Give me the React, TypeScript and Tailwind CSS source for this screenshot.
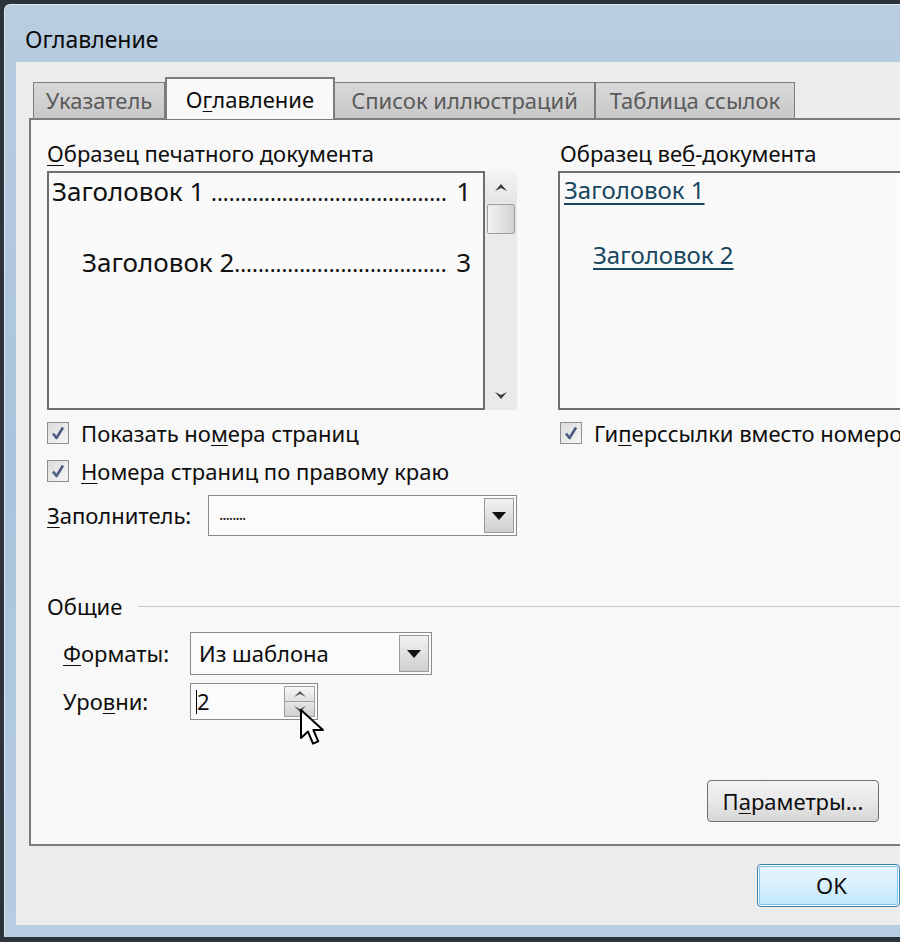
import React from "react";

const F = { fontFamily: '"Noto Sans", "Open Sans", Arial, sans-serif' };

function U({ children }: { children: React.ReactNode }) {
  return <span className="underline decoration-1 underline-offset-[3px]">{children}</span>;
}

function Check() {
  return (
    <div className="w-[22px] h-[22px] border border-[#8e8f8f] bg-gradient-to-br from-[#dcdcdc] to-[#f6f6f6] flex items-center justify-center shrink-0">
      <svg width="16" height="16" viewBox="0 0 16 16">
        <path d="M3 8.5 L6.5 13 L13 2.5" fill="none" stroke="#4d5a82" strokeWidth="2.6" strokeLinejoin="round" />
      </svg>
    </div>
  );
}

function DropBtn() {
  return (
    <div className="w-[30px] self-stretch m-[2px] ml-0 border border-[#9a9a9a] bg-gradient-to-b from-[#f2f2f2] to-[#cfcfcf] flex items-center justify-center">
      <svg width="14" height="8" viewBox="0 0 14 8">
        <path d="M0 0 H14 L7 8 Z" fill="#111" />
      </svg>
    </div>
  );
}

export default function App() {
  return (
    <div className="w-[900px] h-[942px] bg-[#2c333b] pt-[4px] pl-[4px] pb-[5px] overflow-hidden" style={F}>
      <div className="h-full flex flex-col rounded-tl-[6px] bg-gradient-to-b from-[#b9cde0] via-[#a9c3dc] to-[#b7cde1] border-l border-t border-[#dde8f2]">
        {/* title bar */}
        <div className="h-[57px] flex items-center pl-[20px] pt-[12px]">
          <span className="text-[23px] text-[#0a0a0a]">Оглавление</span>
        </div>
        {/* client */}
        <div className="flex-1 ml-[11px] mb-[12px] bg-[#ececec] flex flex-col pl-[13px] pt-[15px] relative text-[#0d0d0d]">
          {/* tabs */}
          <div className="flex items-end h-[41px] pl-[4px] relative z-10">
            <div className="w-[132px] h-[36px] bg-gradient-to-b from-[#d9d9d9] to-[#c8c8c8] border border-[#7c7c7c] border-b-0 flex items-center justify-center text-[22px] text-[#5a5a5a]">
              Указатель
            </div>
            <div className="w-[170px] h-[42px] -mb-[1px] bg-[#f9f9f9] border-2 border-[#7c7c7c] border-b-0 flex items-center justify-center text-[22px] text-[#0d0d0d]">
              О<U>г</U>лавление
            </div>
            <div className="w-[261px] h-[36px] bg-gradient-to-b from-[#d9d9d9] to-[#c8c8c8] border-r-2 border-t border-[#7c7c7c] flex items-center justify-center text-[22px] text-[#5a5a5a]">
              Список иллюстраций
            </div>
            <div className="w-[199px] h-[36px] bg-gradient-to-b from-[#d9d9d9] to-[#c8c8c8] border-r border-t border-[#7c7c7c] flex items-center justify-center text-[22px] text-[#5a5a5a]">
              Таблица ссылок
            </div>
          </div>
          {/* panel */}
          <div className="h-[728px] bg-[#f8f8f8] border-2 border-r-0 border-[#7c7c7c] relative pl-[16px] pt-[20px]">
            <div className="flex">
              {/* left column */}
              <div className="w-[470px] flex flex-col">
                <div className="text-[22px] leading-[26px]">
                  <U>О</U>бразец печатного документа
                </div>
                <div className="flex h-[239px] mt-[5px]">
                  <div className="w-[438px] border-2 border-[#6e6e6e] bg-[#fafafa] pt-[1px] pl-[3px] pr-[12px] text-[26px] text-[#111] leading-[34px]">
                    <div className="flex items-baseline">
                      <span className="whitespace-nowrap">Заголовок 1&nbsp;</span>
                      <span className="flex-1 overflow-hidden whitespace-nowrap text-[22px]">
                        ..................................................................
                      </span>
                      <span className="pl-[8px]">1</span>
                    </div>
                    <div className="flex items-baseline mt-[36px] pl-[30px]">
                      <span className="whitespace-nowrap">Заголовок 2</span>
                      <span className="flex-1 overflow-hidden whitespace-nowrap text-[22px]">
                        ..................................................................
                      </span>
                      <span className="pl-[8px]">3</span>
                    </div>
                  </div>
                  <div className="w-[32px] bg-[#eaeaea] flex flex-col items-center">
                    <div className="h-[32px] w-full flex items-center justify-center bg-gradient-to-b from-[#f4f4f4] to-[#e4e4e4]">
                      <svg width="12" height="7" viewBox="0 0 12 7"><path d="M0 7 L6 0 L12 7 L6 4 Z" fill="#3a3a3a" /></svg>
                    </div>
                    <div className="w-[28px] h-[30px] mt-[1px] border border-[#9c9c9c] rounded-[2px] bg-gradient-to-r from-[#f2f2f2] via-[#e3e3e3] to-[#d2d2d2]" />
                    <div className="flex-1" />
                    <div className="h-[30px] w-full flex items-center justify-center">
                      <svg width="12" height="7" viewBox="0 0 12 7"><path d="M0 0 L6 3 L12 0 L6 7 Z" fill="#3a3a3a" /></svg>
                    </div>
                  </div>
                </div>
                <div className="flex items-center gap-[12px] mt-[10px] h-[26px] text-[22px] whitespace-nowrap">
                  <Check />
                  <span>Показать но<U>м</U>ера страниц</span>
                </div>
                <div className="flex items-center gap-[12px] mt-[12px] h-[26px] text-[22px] whitespace-nowrap">
                  <Check />
                  <span><U>Н</U>омера страниц по правому краю</span>
                </div>
                <div className="flex items-center mt-[11px] h-[41px]">
                  <span className="w-[161px] text-[22px]"><U>З</U>аполнитель:</span>
                  <div className="flex-1 h-[41px] border border-[#8a8a8a] bg-[#fbfbfb] flex">
                    <span className="flex-1 pl-[10px] text-[16px] text-[#222] leading-[37px] tracking-[-1px]">........</span>
                    <DropBtn />
                  </div>
                </div>
              </div>
              {/* divider */}
              <div className="w-[2px] bg-[#8c8c8c] ml-[21px] mt-[2px] h-[445px]" />
              {/* right column */}
              <div className="flex-1 flex flex-col pl-[20px]">
                <div className="text-[22px] leading-[26px] pl-[2px] whitespace-nowrap">
                  Образец ве<U>б</U>-документа
                </div>
                <div className="h-[239px] mt-[5px] border-2 border-r-0 border-[#6e6e6e] bg-[#fafafa] pl-[4px] pt-[1px] text-[24px] leading-[32px] text-[#18475f]">
                  <div className="underline decoration-2 underline-offset-[4px] whitespace-nowrap">Заголовок 1</div>
                  <div className="underline decoration-2 underline-offset-[4px] mt-[33px] pl-[29px] whitespace-nowrap">Заголовок 2</div>
                </div>
                <div className="flex items-center gap-[12px] mt-[10px] h-[26px] pl-[2px] text-[22px] whitespace-nowrap">
                  <Check />
                  <span>Ги<U>п</U>ерссылки вместо номеров</span>
                </div>
              </div>
            </div>
            {/* Общие */}
            <div className="flex items-center mt-[6px] h-[26px]">
              <span className="text-[22px]">Общие</span>
              <div className="flex-1 h-[1px] bg-[#c8c8c8] ml-[16px]" />
            </div>
            <div className="flex items-center mt-[13px] h-[43px] pl-[16px]">
              <span className="w-[127px] text-[22px]"><U>Ф</U>орматы:</span>
              <div className="w-[242px] h-[43px] border border-[#8a8a8a] bg-[#fbfbfb] flex">
                <span className="flex-1 pl-[8px] text-[22px] leading-[41px]">Из шаблона</span>
                <DropBtn />
              </div>
            </div>
            <div className="flex items-center mt-[8px] h-[37px] pl-[16px]">
              <span className="w-[127px] text-[22px]">Уро<U>в</U>ни:</span>
              <div className="w-[128px] h-[37px] border border-[#8a8a8a] bg-[#fbfbfb] flex relative">
                <span className="flex-1 pl-[5px] text-[22px] leading-[35px] flex items-center">
                  <span className="w-[1px] h-[24px] bg-black" />
                  <span>2</span>
                </span>
                <div className="w-[31px] m-[2px] ml-0 flex flex-col">
                  <div className="flex-1 border border-[#a0a0a0] bg-gradient-to-b from-[#f7f7f7] to-[#e1e1e1] flex items-center justify-center">
                    <svg width="12" height="6" viewBox="0 0 12 6"><path d="M0 6 L6 0 L12 6 L6 3 Z" fill="#555" /></svg>
                  </div>
                  <div className="flex-1 border border-t-0 border-[#a0a0a0] bg-gradient-to-b from-[#e6e6e6] to-[#cfcfcf] flex items-center justify-center">
                    <svg width="12" height="6" viewBox="0 0 12 6"><path d="M0 0 L6 3 L12 0 L6 6 Z" fill="#555" /></svg>
                  </div>
                </div>
                {/* mouse cursor */}
                <svg className="absolute left-[108px] top-[24px]" width="28" height="40" viewBox="0 0 14 20">
                  <path d="M1 1 L1 15 L4.5 11.8 L7 17.8 L9.6 16.7 L7.2 11 L12 11 Z" fill="#fff" stroke="#000" strokeWidth="1" strokeLinejoin="round" />
                </svg>
              </div>
            </div>
            <div className="flex justify-start mt-[60px] pl-[660px]">
              <div className="w-[172px] h-[42px] rounded-[4px] border border-[#6f6f6f] bg-gradient-to-b from-[#f3f3f3] via-[#e8e8e8] to-[#d6d6d6] flex items-center justify-center text-[22px]">
                П<U>а</U>раметры...
              </div>
            </div>
          </div>
          {/* bottom buttons */}
          <div className="flex pl-[728px] pt-[18px]">
            <div className="w-[160px] h-[43px] rounded-[4px] border border-[#3c7fb1] bg-gradient-to-b from-[#eaf6fd] via-[#d9effc] to-[#bee6fd] shadow-[inset_0_0_0_1px_#fff,inset_0_0_0_2px_#7ec4ea] flex items-center pl-[58px] text-[22px]">
              OK
            </div>
          </div>
        </div>
      </div>
    </div>
  );
}
